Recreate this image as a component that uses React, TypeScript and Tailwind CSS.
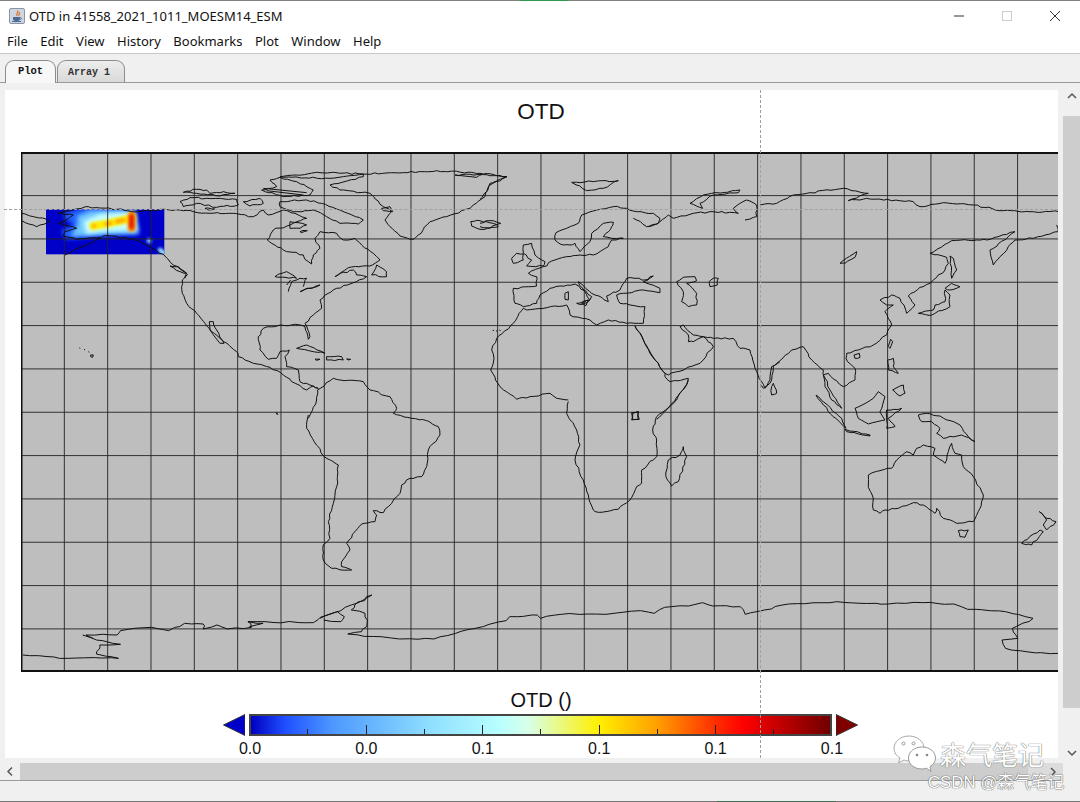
const menus = ["File", "Edit", "View", "History", "Bookmarks", "Plot", "Window", "Help"];

// coastlines, traced from the picture; each group has its own offset and scale
const coastA = [
  "M503 343 487 360 487 400 500 430 530 460 555 490 575 515 600 535 650 575 655 590 700 610 750 622 790 645 815 665 860 690 880 678 895 685 870 675 840 665 835 630 800 620 795 590 808 570 780 575 770 595 745 598 720 570 715 530 730 505 780 495 840 495 855 500 865 538 870 530 855 490 880 465 905 445 900 420 925 400 950 385 990 372 1040 350 1010 345 1000 330 960 340 945 350 985 323 1050 318 1080 300 1060 280 1025 255 1005 235 970 240 950 220 900 215 885 235 900 265 880 285 875 312 855 298 850 285 790 270 755 250 742 240 760 210 810 195 830 185 860 175 825 160 790 150 745 165 730 150 700 170 640 160 570 160 520 155 480 150 435 148",
  "M893 690 890 720 865 775",
  "M893 690 940 655 960 660 1030 665 1050 690 1110 710 1130 745",
  "M490 97 530 88 560 90 570 100 610 95 645 100 600 108 530 100 490 97Z",
  "M480 125 510 113 560 115 650 118 655 135 590 142 530 130 490 140 480 125Z",
  "M555 145 585 147 565 150Z M670 125 720 115 730 130 690 138 670 125Z",
  "M780 125 860 120 905 130 960 150 1030 180 1015 192 960 190 920 170 880 150 820 155 780 140 780 125Z",
  "M750 60 780 52 830 65 880 90 870 105 790 110 725 90 770 80 750 60Z M730 85 860 98 M740 92 850 105",
  "M780 50 900 38 1030 42 1150 38 1250 32 1380 40 1461 50 1410 70 1395 110 1350 145 1280 170 1230 185 1195 225 1180 238 1140 228 1110 200 1095 180 1115 155 1090 140 1050 100 960 90 930 75 1030 50 1030 42 930 55 780 50Z",
  "M1085 145 1110 140 1118 155 1090 152Z M1305 45 1385 42 1370 52Z",
  "M1352 185 1380 182 1420 190 1435 200 1380 208 1355 198 1352 185Z",
  "M810 185 860 195 840 205 810 205 810 185Z M840 215 862 212 845 218Z",
  "M1055 345 1070 315 1100 335 1100 350 1055 345Z",
  "M765 350 800 335 830 355 795 352 765 350Z M805 395 815 365 840 355 860 355 850 380 M840 395 900 375 870 385 840 395Z M800 375 812 360",
  "M568 485 580 485 590 510 612 550 600 550 570 510 568 485Z",
  "M830 565 860 555 915 580 880 575 830 565Z M920 590 965 590 970 600 920 600Z M885 598 900 598 890 601Z M980 597 992 598 985 600Z",
  "M450 318 475 320 500 340 480 335 450 318Z",
  "M178 564 181 565 M192 568 195 570 M205 575 208 577 M212 585 220 585 218 592 212 590Z M770 758 774 764",
  "M5 160 40 170 80 178 90 185 50 200 5 182",
];

const alaska = [
  "M195 315 245 290 300 265 310 258 335 258 410 270 450 290 490 313 520 345 560 370 555 385",
  "M495 178 420 185 350 178 265 170 200 183 175 190 220 195 190 215 175 220 230 235 195 245 190 258 230 268 300 262",
];

const coastB = [
  "M225 240 228 218 260 205 295 190 305 165 350 150 400 140 440 145 470 155 520 160 540 175 535 190 500 200 470 180 460 175 M505 200 540 185 565 165 580 175 640 160 700 155 775 160 760 145 800 120 830 135 830 170 795 180",
  "M225 240 250 255 270 255 285 250 300 275 330 245 335 220 370 190 400 187 395 200 370 230 395 235 430 235 395 240 385 260 340 285 300 285 260 290 225 300 190 320 145 340 170 350 170 378 100 385 105 430 130 440 170 430 180 405 210 385 240 378 285 372 335 410 325 425 305 430 330 420 295 365 335 400 345 405 385 425 380 408 420 390 440 355 465 355 495 360 520 348 490 365 540 385 540 398 490 390 430 400 410 405 420 430 450 435 495 440 490 490 465 490 440 490 385 480 350 495 330 480 270 465 260 435 140 450 130 445",
  "M130 445 100 490 50 535 35 570 42 595 32 630 60 680 110 718 150 710 210 700 230 715 265 720",
  "M465 498 480 520 510 580 555 640 555 650 570 665 625 655 615 680 575 735 530 778",
  "M465 498 490 540 525 600 555 640 565 645 660 610 700 560 670 530 640 545 625 545 625 525 600 500 610 495 640 525 670 530 700 535 760 535 780 565 810 570 830 635 855 685 870 660 875 620 900 605",
  "M590 365 610 352 645 350 650 362 620 370 650 400 650 435 625 440 605 425 610 395 590 365Z",
  "M688 365 700 355 715 355 712 375 690 380 688 365Z",
  "M630 130 670 105 780 90 775 98 700 105 660 130 668 145 630 130Z",
  "M275 67 415 62 370 85 320 92 275 67Z",
  "M875 680 880 670 890 700 875 705 875 680Z",
  "M95 295 110 280 130 282 130 300 100 310 95 295Z",
  "M130 255 155 250 165 285 195 305 190 318 140 318 155 300 130 280 130 255Z",
  "M255 400 265 395 265 420 255 418 255 400Z M290 430 325 420 318 437 290 430Z",
  "M38 511 42 512 M48 513 52 513 M58 510 62 512 M455 758 475 755 475 778 458 778Z",
  "M0 190 30 182 62 190 30 205 0 200 M0 45 40 47 80 50 30 75 20 95 0 118",
];

const coastC = [
  "M0 105 50 100 100 75 250 55 325 70 265 92 320 85 460 95 480 110 550 98 640 105 730 122 810 125 895 125",
  "M890 165 895 185 820 205 765 210 745 230 700 285 690 240 765 185 680 210 650 210 575 212 510 250 560 262 565 280 555 300 510 340 480 352 445 378 465 405 440 430 420 385 395 375 360 390 380 405 400 405 375 425 395 465 380 495 340 525 295 540 260 550 258 565 285 595 285 630 250 650 205 610 190 615 210 660 245 715 215 690 195 650 190 600 155 570 130 530 95 540 40 590 30 640 10 655 0 645",
  "M475 430 520 420 525 405 555 395 555 360 570 375 570 410 515 435 475 430Z",
  "M555 355 575 340 600 350 570 360 555 355Z",
  "M570 258 580 265 590 300 575 325 570 258Z",
  "M240 280 290 245 285 262 255 280 240 280Z",
  "M385 530 392 508 398 515 390 535 385 530Z",
  "M285 565 282 555 298 550 300 562 285 565Z",
  "M383 570 400 565 400 590 415 610 385 600 383 570Z",
  "M398 660 430 645 435 670 420 678 398 660Z",
  "M285 715 340 685 355 665 375 680 360 725 375 750 325 762 295 745 285 715Z",
  "M380 720 425 715 385 745 405 770 380 775 380 720Z",
];

const coastD = [
  "M410 85 400 100 455 115 500 122 535 140 540 165 505 210 500 260 485 290 450 295 425 315 420 340 370 398 340 392 350 405 345 425 305 432 285 455 260 490 270 510 245 545 245 560 275 570 215 565 190 540 190 495 210 475 205 425 220 370 230 320 235 255 190 228 140 145 145 105",
  "M925 65 920 100 950 150 960 195 945 240 970 300 985 345 1000 390 1015 397 1075 388 1110 360 1130 320 1145 310 1145 270 1190 230 1190 180 1178 150 1190 110 1250 60 1285 0",
  "M1225 240 1260 225 1270 200 1280 230 1255 305 1235 318 1218 290 1225 240Z",
  "M1118 100 1135 95 1138 118 1115 120 1118 100Z",
  "M48 98 52 104",
];

const coastE = [
  "M108 -15 185 55 198 85 160 50 130 15 108 -15Z",
  "M195 88 270 105 270 108 200 95 195 88Z",
  "M265 225 300 212 335 205 350 180 380 155 400 165 410 145 430 135 465 145 460 165 495 190 515 130 525 160 545 165 550 200 580 230 610 285 600 325 580 365 530 370 490 355 470 325 465 340 430 315 400 308 355 325 315 330 300 340 280 330 280 295 265 262 265 225Z",
  "M535 392 565 390 555 412 540 410 535 392Z",
  "M415 45 440 40 480 48 540 75 565 110 585 125 545 105 490 115 470 100 480 85 455 65 425 65 415 45Z",
  "M778 335 800 355 828 365 800 390 790 375 800 360 778 335Z",
  "M725 430 780 390 790 395 755 435 725 430Z",
];

const coastF = [
  "M33 225 100 235 172 235 140 222 145 195 175 193 140 180 125 165 170 165 175 152 220 142 245 152 268 130 295 132 295 147 315 135 330 147 365 142 360 125 385 125 455 128 465 112 495 92 510 75 540 45 515 75 510 90 530 100 533 130 525 155 505 162 580 177 630 177 690 145 735 122 740 110 780 105 785 115 815 103 880 103 930 92 950 100 965 82 1000 78 1020 68 1035 78 1075 80 1082 103 1110 90 1145 72 1215 65 1250 70 1290 72 1340 68 1385 72 1405 88 1460 95 1500 115 1470 145 1478 175 1455 180 1460 205 1490 215 1537 220",
  "M465 115 490 95 500 110 495 125 470 120 M120 165 135 175 M360 125 382 130 362 140",
];

// break the long straight runs up a bit so they read as coast
const rough = (d: string) =>
  d
    .split(/(?=M)/)
    .map((sub) => {
      const closed = sub.includes("Z");
      const n = sub.replace(/[MZ]/g, " ").trim().split(/\s+/).map(Number);
      const pts: number[][] = [];
      for (let i = 0; i < n.length; i += 2) pts.push([n[i], n[i + 1]]);
      if (pts.length < 3) return sub;
      const out: number[][] = [];
      pts.forEach((p, i) => {
        const q = pts[i + 1];
        if (!q) return out.push(p);
        const len = Math.hypot(q[0] - p[0], q[1] - p[1]);
        const steps = Math.max(1, Math.ceil(len / 13));
        for (let k = 0; k < steps; k++) {
          const x = p[0] + ((q[0] - p[0]) * k) / steps;
          const y = p[1] + ((q[1] - p[1]) * k) / steps;
          if (k === 0) out.push([x, y]);
          else {
            const s = Math.sin(x * 12.9 + y * 78.2) * 4375.5;
            const t = Math.sin(x * 39.3 + y * 11.7) * 2741.3;
            out.push([x + (s - Math.floor(s) - 0.5) * 5, y + (t - Math.floor(t) - 0.5) * 5]);
          }
        }
      });
      return "M" + out.map((p) => `${p[0].toFixed(1)} ${p[1].toFixed(1)}`).join(" ") + (closed ? "Z" : "");
    })
    .join(" ");

const vLines = Array.from({ length: 24 }, (_, i) => 21 + 43.33 * i);
const hLines = Array.from({ length: 11 }, (_, i) => 195.6 + 43.33 * i);

const Coast = ({ d, tf }: { d: string[]; tf: string }) => (
  <g transform={tf}>
    {d.map((p, i) => (
      <path key={i} d={rough(p)} fill="none" stroke="#111" strokeWidth="1" strokeLinejoin="round" vectorEffect="non-scaling-stroke" />
    ))}
  </g>
);

const MapPlot = () => (
  <svg viewBox="21 152 1037 520" className="block w-[1037px] h-[520px] ml-4 shrink-0">
    <defs>
      <filter id="b5" filterUnits="userSpaceOnUse" x="100" y="120" width="460" height="240"><feGaussianBlur stdDeviation="7" /></filter>
      <filter id="b2" filterUnits="userSpaceOnUse" x="100" y="120" width="460" height="240"><feGaussianBlur stdDeviation="4.5" /></filter>
      <clipPath id="heat"><rect x="46" y="209.3" width="118.3" height="45" /></clipPath>
    </defs>
    <rect x="21" y="152" width="1037" height="520" fill="#bebebe" />
    <rect x="46" y="209.3" width="118.3" height="45" fill="#0000c8" />
    <g clipPath="url(#heat)">
      <g transform="translate(0 150) scale(0.3333)">
        <path filter="url(#b5)" fill="#2060ff" d="M195 186 265 172 408 176 418 254 340 256 195 268 185 240 222 225 192 205Z" />
        <path filter="url(#b5)" fill="#70c8ff" d="M232 198 270 182 404 182 414 250 330 252 212 260 232 225Z" />
        <path filter="url(#b5)" fill="#c8ffff" d="M250 214 300 192 400 186 412 242 330 244 258 252Z" />
        <path filter="url(#b2)" fill="none" stroke="#ffee00" strokeWidth="24" strokeLinecap="round" d="M280 228 325 220 395 205" />
        <path filter="url(#b2)" fill="none" stroke="#ffa000" strokeWidth="11" strokeLinecap="round" d="M281 228 283 228 M318 222 332 219 M350 215 372 210" />
        <path filter="url(#b2)" fill="none" stroke="#ff9000" strokeWidth="24" strokeLinecap="round" d="M395 195 395 234" />
        <path filter="url(#b2)" fill="none" stroke="#e01000" strokeWidth="12" strokeLinecap="round" d="M395 198 395 232" />
        <path filter="url(#b2)" fill="none" stroke="#a0f0ff" strokeWidth="13" strokeLinecap="round" d="M447 272 448 273 M480 300 492 310" />
      </g>
    </g>
    {vLines.map((x) => (
      <line key={x} x1={x} x2={x} y1="152" y2="672" stroke="#222" strokeWidth="0.9" />
    ))}
    {hLines.map((y) => (
      <line key={y} x1="21" x2="1058" y1={y} y2={y} stroke="#222" strokeWidth="0.9" />
    ))}
    <Coast d={alaska} tf="translate(0 150) scale(0.3333)" />
    <Coast d={coastA} tf="translate(20 160) scale(0.3333)" />
    <Coast d={coastB} tf="translate(480 160) scale(0.3333)" />
    <Coast d={coastC} tf="translate(760 170) scale(0.3333)" />
    <Coast d={coastD} tf="translate(260 380) scale(0.3333)" />
    <Coast d={coastE} tf="translate(780 400) scale(0.3333)" />
    <Coast d={coastF} tf="translate(0 580) scale(0.6887 0.3333)" />
    <path d="M1058 153 21.500 153 21.500 671 1058 671" fill="none" stroke="#111" strokeWidth="2" />
  </svg>
);

const ticks = [
  { x: 56, long: false }, { x: 115, long: true }, { x: 173, long: false }, { x: 231, long: true },
  { x: 289, long: false }, { x: 348, long: true }, { x: 406, long: false }, { x: 464, long: true }, { x: 522, long: false },
];

const ColorBar = () => (
  <div className="w-[1072px] flex flex-col items-center text-[#111] font-['Liberation_Sans',sans-serif]">
    <div className="text-[20px] leading-[24px] mt-[16px]">OTD ()</div>
    <div className="flex items-center mt-[2px] mr-[2px] gap-[4px] h-[22px]">
      <svg width="22" height="22" viewBox="0 0 22 22" className="block">
        <path d="M0.5 11 22 0.5 22 21.5Z" fill="#0000c8" stroke="#333" />
      </svg>
      <div className="relative w-[583px] h-[22px] border-2 border-[#444] bg-[linear-gradient(to_right,#0000c0_0%,#2050ff_6%,#4c98ff_14%,#8fdfff_31%,#b8ffff_43%,#d8ffe8_48%,#fff000_60%,#ffa000_70%,#ff3000_80%,#ff0000_85%,#700000_100%)]">
        {ticks.map((t) => (
          <div
            key={t.x}
            className={t.long ? "absolute bottom-0 w-px h-[9px] bg-[#222]" : "absolute bottom-0 w-px h-[5px] bg-[#222]"}
            style={{ left: t.x }}
          />
        ))}
      </div>
      <svg width="22" height="22" viewBox="0 0 22 22" className="block">
        <path d="M0 0.5 21.5 11 0 21.5Z" fill="#800000" stroke="#333" />
      </svg>
    </div>
    <div className="flex w-[642px] justify-between mt-[3px] text-[16px] leading-[20px]">
      {["0.0", "0.0", "0.1", "0.1", "0.1", "0.1"].map((v, i) => (
        <div key={i} className="w-[60px] text-center">{v}</div>
      ))}
    </div>
  </div>
);

const JavaIcon = () => (
  <svg width="16" height="16" viewBox="0 0 16 16" className="block">
    <rect x="0.5" y="0.5" width="15" height="15" rx="1.5" fill="#cfd6e0" stroke="#8a94a6" />
    <path d="M8.5 2.5C10 4.5 6.5 5.5 8 8M10.5 4C11 6 9 6.5 10 8" fill="none" stroke="#d8702a" strokeWidth="1.2" />
    <path d="M4 9H11V11C11 12.5 9.5 13 7.5 13S4 12.5 4 11Z" fill="#4d6a94" />
    <path d="M11 9.5C13 9.5 13 11.5 11 11.5M3 13.5H12" fill="none" stroke="#4d6a94" />
  </svg>
);

const WeChat = () => (
  <svg width="44" height="38" viewBox="0 0 44 38" className="block">
    <path d="M16 1C7.5 1 1 6.5 1 13.5 1 17.5 3.5 21 7 23L5.5 28 11 25C13 25.7 15 26 16 26 24.5 26 31 20.5 31 13.5S24.5 1 16 1Z" fill="#fff" stroke="#aaa" />
    <path d="M29 12C21 12 15.500 17 15.500 23S21 34 29 34C30.500 34 32 33.700 33.500 33.200L38 36.500 37 31.500C40.500 29.500 42.500 26.500 42.500 23 42.500 17 37 12 29 12Z" fill="#fff" stroke="#999" />
    <circle cx="10.500" cy="8.500" r="1.500" fill="#fff" stroke="#999" />
    <circle cx="20.500" cy="8.500" r="1.500" fill="#fff" stroke="#999" />
    <circle cx="24" cy="20" r="1.300" fill="#888" />
    <circle cx="34" cy="20" r="1.300" fill="#888" />
  </svg>
);

const App = () => {
  return (
    <div className="relative w-[1080px] h-[802px] overflow-hidden flex flex-col bg-[#f0f0f0] font-['Noto_Sans',sans-serif] text-[#111]">
      {/* window top edge */}
      <div className="relative h-px bg-[#808080] shrink-0">
        <div className="absolute left-[520px] top-0 w-[48px] h-px bg-[#2e9c4a]" />
      </div>

      <div className="h-[30px] shrink-0 bg-white flex items-center pl-[9px]">
        <JavaIcon />
        <div className="ml-[4px] pt-px text-[13px] leading-none">OTD in 41558_2021_1011_MOESM14_ESM</div>
        <div className="ml-auto flex items-center h-full">
          <svg width="12" height="12" viewBox="0 0 12 12" className="block mr-[36px]"><path d="M1 6H11" stroke="#333" /></svg>
          <svg width="12" height="12" viewBox="0 0 12 12" className="block mr-[36px]"><rect x="1.500" y="1.500" width="9" height="9" fill="none" stroke="#ccc" /></svg>
          <svg width="12" height="12" viewBox="0 0 12 12" className="block mr-[19px]"><path d="M1 1 11 11M11 1 1 11" stroke="#333" /></svg>
        </div>
      </div>

      <div className="h-[22px] shrink-0 bg-white border-b border-[#c8c8c8] flex items-center gap-[12.500px] pl-[7px] text-[13px] box-content">
        {menus.map((m) => (
          <div key={m}>{m}</div>
        ))}
      </div>

      <div className="h-[29px] shrink-0 border-b border-[#9a9a9a] flex items-end pl-[5px] gap-px font-['Liberation_Mono',monospace] font-bold">
        <div className="w-[51px] h-[23px] -mb-px flex items-center justify-center bg-[#f7f7f7] border border-b-0 border-[#8c8c8c] rounded-t-[9px] text-[10.500px]">Plot</div>
        <div className="w-[68px] h-[22px] flex items-center justify-start pl-[10px] pt-[2px] bg-[linear-gradient(to_bottom,#ededed,#d9d9d9)] border border-b-0 border-[#8c8c8c] rounded-t-[9px] text-[#333] text-[10px]">Array 1</div>
      </div>

      <div className="flex-1 flex min-h-0 pt-[7px]">
        <div className="w-[1058px] pl-[5px] h-[668px] shrink-0">
          <div className="h-full bg-white overflow-hidden flex flex-col">
            <div className="w-[1072px] h-[62px] shrink-0 flex items-center justify-center font-['Liberation_Sans',sans-serif] text-[22.500px] leading-none pb-[18px]">OTD</div>
            <MapPlot />
            <ColorBar />
          </div>
        </div>
        {/* vertical scrollbar */}
        <div className="ml-[5px] w-[17px] h-[668px] flex flex-col items-center">
          <svg width="12" height="8" viewBox="0 0 12 8" className="block mt-[2px] mb-[16px]"><path d="M2 6 6 2 10 6" fill="none" stroke="#555" strokeWidth="1.500" /></svg>
          <div className="w-full h-[592px] bg-[#cdcdcd]" />
          <svg width="12" height="8" viewBox="0 0 12 8" className="block mt-[41px]"><path d="M2 2 6 6 10 2" fill="none" stroke="#555" strokeWidth="1.500" /></svg>
        </div>
      </div>

      {/* horizontal scrollbar */}
      <div className="absolute left-0 top-[763px] w-[1063px] h-[18px] border-b border-[#9a9a9a] flex items-center">
        <svg width="20" height="17" viewBox="0 0 20 17" className="block shrink-0"><path d="M12 4.500 8 8.500 12 12.500" fill="none" stroke="#555" strokeWidth="1.500" /></svg>
        <div className="w-[1008px] h-[17px] bg-[#cdcdcd]" />
        <div className="flex-1 h-[17px] bg-[#dcdcdc] flex items-center justify-start pl-[21px]">
          <svg width="8" height="10" viewBox="0 0 8 10" className="block"><path d="M2 1 6 5 2 9" fill="none" stroke="#555" strokeWidth="1.500" /></svg>
        </div>
      </div>

      {/* window bottom edge */}
      <div className="absolute left-0 bottom-0 w-full h-px bg-[#777]">
        <div className="absolute left-[717px] top-0 w-[119px] h-px bg-[#3f6f55]" />
      </div>

      {/* crosshair */}
      <div className="absolute left-[760px] top-[90px] h-[668px] border-l border-dashed border-[#a0a0a0]" />
      <div className="absolute left-[4px] top-[209px] w-[1054px] border-t border-dashed border-[#a0a0a0]" />

      {/* watermark */}
      <div className="absolute left-[893px] top-[735px]"><WeChat /></div>
      <div className="absolute left-[940px] top-[737px] font-['Noto_Sans_CJK_SC',sans-serif] text-[26px] leading-[34px] text-white [text-shadow:0_0_1px_#666,0_0_1px_#666]">森气笔记</div>
      <div className="absolute left-[928px] top-[773px] font-['Liberation_Sans','Noto_Sans_CJK_SC',sans-serif] text-[16.800px] leading-[20px] whitespace-nowrap text-white [text-shadow:0_0_1px_#555,0_0_1px_#555]">CSDN @森气笔记</div>
    </div>
  );
};

export default App;
